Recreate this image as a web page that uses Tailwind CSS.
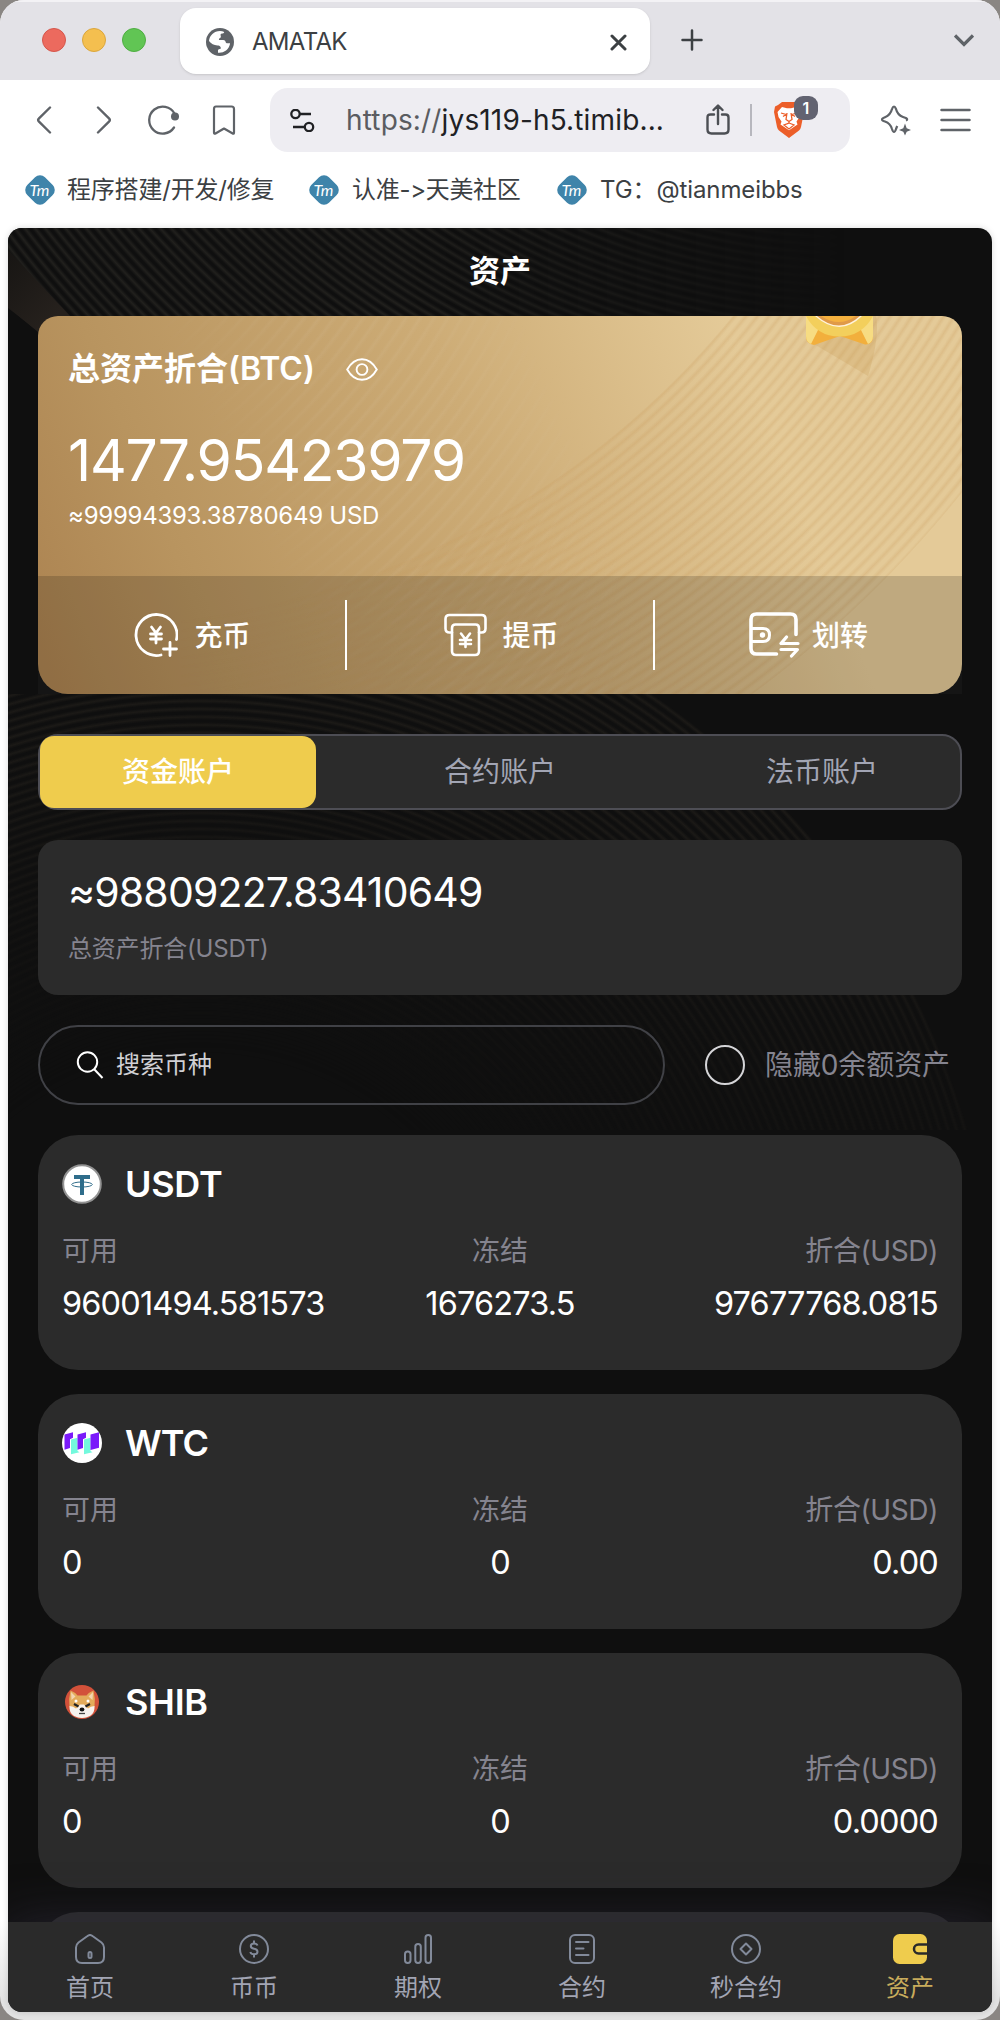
<!DOCTYPE html>
<html lang="zh-CN">
  <head>
    <meta charset="UTF-8" />
    <title>AMATAK</title>
    <script src="https://cdn.jsdelivr.net/npm/@tailwindcss/browser@4"></script>
  </head>
  <body class="bg-[#8a8683] font-['Inter','Noto_Sans_CJK_SC',sans-serif] [font-feature-settings:'calt'_0]">
    <div class="w-[1000px] h-[2020px] rounded-[24px] overflow-hidden flex flex-col bg-linear-to-b from-white from-95% to-[#e2e2e2] to-99%">
      <!-- Tab strip -->
      <div class="h-20 shrink-0 bg-[#e3e2e7] border-t-2 border-[#f3f2f5] flex items-center pl-[42px] pr-[26px] pb-[2px]">
        <div class="flex gap-4">
          <span class="size-6 rounded-full bg-[#ec6a5e] border border-[#d5564b]"></span>
          <span class="size-6 rounded-full bg-[#f4bf4f] border border-[#dba63c]"></span>
          <span class="size-6 rounded-full bg-[#61c554] border border-[#4fae42]"></span>
        </div>
        <div class="ml-[34px] mt-[2px] w-[470px] h-[66px] rounded-[16px] bg-white shadow-sm flex items-center pt-[2px] pl-[26px] pr-[23px]">
          <svg class="size-7" viewBox="0 0 28 28">
            <circle cx="14" cy="14" r="14" fill="#5f6368" />
            <path d="M14 3c1.500 0 3 .3 4.200.9-.2 1-1.200 1.600-2.200 1.700-1.200.1-1.800 1-1.300 2.200.4 1 .1 2-.9 2.400-1 .4-1 1.100-.7 1.900h4.200c1.300 0 2 .7 2.300 1.800.2.900.9 1.300 1.900 1.300h2.600A11 11 0 0 1 12 24.800v-2c0-1 .6-1.500 1.600-1.700 1.100-.2 1.500-1.200.9-2.200-.7-1.100-1.700-1.500-3-1.500C8 17.400 5 15.500 3 13 3.500 7.500 8 3 14 3z" fill="#fff" />
            <path d="M17 6.500c2-.2 3.500-.8 4.500-1.500l3.500 6.500c-1.500 1.500-4 2-5.500.8-1-.8-2.500-.6-2.500-2.300z" fill="#5f6368" />
          </svg>
          <span class="ml-[18px] text-[24px] text-[#3c4043] tracking-[-0.7px]">AMATAK</span>
          <svg class="ml-auto size-[17px]" viewBox="0 0 17 17" stroke="#3c4043" stroke-width="3" stroke-linecap="round"><path d="M2 2l13 13M15 2L2 15" /></svg>
        </div>
        <svg class="ml-[31px] size-[22px]" viewBox="0 0 22 22" stroke="#3c4043" stroke-width="2.500" stroke-linecap="round"><path d="M11 1.500v19M1.500 11h19" /></svg>
        <svg class="ml-auto w-5 h-[13px]" viewBox="0 0 20 13" fill="none" stroke="#5f6368" stroke-width="3.300"><path d="M1 1.500l9 9 9-9" /></svg>
      </div>

      <!-- Address bar -->
      <div class="h-20 shrink-0 flex items-center pl-[36px] pr-[29px] text-[#5f6368]">
        <svg class="w-4 h-7" viewBox="0 0 16 28" fill="none" stroke="currentColor" stroke-width="2.400" stroke-linecap="round" stroke-linejoin="round"><path d="M14 1.500L3 12.300q-1.700 1.700 0 3.400L14 26.500" /></svg>
        <svg class="ml-[44px] w-4 h-7" viewBox="0 0 16 28" fill="none" stroke="currentColor" stroke-width="2.400" stroke-linecap="round" stroke-linejoin="round"><path d="M2 1.500l11 10.800q1.700 1.700 0 3.400L2 26.500" /></svg>
        <svg class="ml-[36px] w-8 h-[30px]" viewBox="0 0 32 30" fill="none" stroke="currentColor" stroke-width="2.300" stroke-linecap="round"><path d="M26 22.500A13.500 13.500 0 1 1 26.500 8.500" /><circle cx="27" cy="11.500" r="4" fill="currentColor" stroke="none" /></svg>
        <svg class="ml-[32px] w-[24px] h-[31px]" viewBox="0 0 24 31" fill="none" stroke="currentColor" stroke-width="2.200" stroke-linejoin="round"><path d="M4 1.500h15.500q2.500 0 2.500 2.500v23.500q0 2-1.700.8L12 23.500l-8.500 5q-1.500.8-1.500-1V4q0-2.500 2-2.500z" /></svg>
        <div class="ml-[34px] w-[580px] h-16 rounded-[18px] bg-[#eeedf2] flex items-center pl-[20px]">
          <svg class="w-[25px] h-[23px]" viewBox="0 0 25 23" fill="none" stroke="#202124" stroke-width="2.300"><circle cx="5.500" cy="5" r="4.200" /><path d="M9.700 5H21M3 18h11.500" /><circle cx="19" cy="18" r="4.200" /></svg>
          <span class="ml-[31px] w-[330px] text-[28px] text-[#202124] whitespace-nowrap tracking-[0.15px]"><span class="text-[#5a5c61]">https://</span>jys119-h5.timib...</span>
          <svg class="ml-[30px] -mt-[2px] w-6 h-[31px]" viewBox="0 0 24 31" fill="none" stroke="#4c4f54" stroke-width="2.400" stroke-linecap="round" stroke-linejoin="round"><path d="M8 10.500H4.500q-3 0-3 3v12q0 4 4 4h13q4 0 4-4v-12q0-3-3-3H16M12 20V2M7.500 6L12 1.500 16.500 6" /></svg>
          <span class="ml-[20px] w-[2px] h-8 bg-[#b7b7be]"></span>
          <div class="relative ml-[22px]">
            <svg class="w-[30px] h-9" viewBox="0 0 30 36">
              <path d="M8 0h14l3.500 3.500L29 4.500 30 10l-3 15q-.5 2-2 3.500L15 36 5 28.500Q3.500 27 3 25L0 10l1-5.500 3-1.500z" fill="#ec5e29" />
              <path d="M8 5l5 1.300h4L22 5l4.500 5-1 5-3 4.500 1 3L15 28.300l-8.500-5.800 1-3-3-4.500-1-5z" fill="#fff" />
              <path d="M7 11l5 1.500-3 2M23 11l-5 1.500 3 2M13 11l-1 6.500 3 2 3-2L17 11M15 19v2l-5 2 5 4 5-4-5-2" fill="none" stroke="#ec5e29" stroke-width="1.300" />
            </svg>
            <span class="absolute left-[20px] -top-[6px] size-6 rounded-[9px] bg-[#626371] text-white text-[16px] font-semibold leading-6 text-center">1</span>
          </div>
        </div>
        <svg class="ml-[30px] w-[31px] h-[31px]" viewBox="0 0 31 31" fill="none" stroke="currentColor" stroke-width="2.200" stroke-linejoin="round">
          <path d="M12 4q2-5 4 0 1.500 6 7 8l3.500 1.300q1.500 1.200-.5 2.200M12 4q-1.500 6-7 8.200Q-1 14.500 5 16.500q5.500 2 7 7.500 2 6 4 0l1.200-3" />
          <path d="M25 18.500l1.700 4.800 4.300 1.700-4.300 1.700L25 30.500l-1.700-3.800L19 25l4.300-1.700z" fill="currentColor" stroke="none" />
        </svg>
        <svg class="ml-auto w-[31px] h-6" viewBox="0 0 31 24" stroke="currentColor" stroke-width="2.500" stroke-linecap="round"><path d="M1.500 2h28M1.500 12h28M1.500 22h28" /></svg>
      </div>

      <!-- Bookmarks -->
      <div class="h-[68px] shrink-0 flex items-center pl-[25px] pb-[8px] text-[24px] text-[#3c4043] whitespace-nowrap">
        <svg class="size-[30px]" viewBox="0 0 30 30"><rect x="2.500" y="2.500" width="25" height="25" rx="7" transform="rotate(45 15 15)" fill="#3f84aa" /><text x="14.500" y="21" text-anchor="middle" font-family="Lato" font-style="italic" font-size="16" fill="#fff">Tm</text></svg>
        <span class="ml-[12px] w-[207px] tracking-[-0.2px]">程序搭建/开发/修复</span>
        <svg class="ml-[35px] size-[30px]" viewBox="0 0 30 30"><rect x="2.500" y="2.500" width="25" height="25" rx="7" transform="rotate(45 15 15)" fill="#3f84aa" /><text x="14.500" y="21" text-anchor="middle" font-family="Lato" font-style="italic" font-size="16" fill="#fff">Tm</text></svg>
        <span class="ml-[13px] w-[170px] tracking-[-0.3px]">认准-&gt;天美社区</span>
        <svg class="ml-[35px] size-[30px]" viewBox="0 0 30 30"><rect x="2.500" y="2.500" width="25" height="25" rx="7" transform="rotate(45 15 15)" fill="#3f84aa" /><text x="14.500" y="21" text-anchor="middle" font-family="Lato" font-style="italic" font-size="16" fill="#fff">Tm</text></svg>
        <span class="ml-[13px] tracking-[-0.1px]">TG：@tianmeibbs</span>
      </div>

      <!-- Page -->
      <div class="relative mx-2 mb-2 h-[1784px] rounded-[14px] overflow-hidden bg-[#0f0f0f] shadow-[0_0_6px_rgba(0,0,0,0.15)] flex flex-col">
        <div class="absolute inset-x-0 top-0 h-[120px] bg-[repeating-radial-gradient(circle_at_842px_-628px,#0f0f0f_0px,#0f0f0f_2px,#21201d_5px,#0f0f0f_8px)] mask-r-from-40% mask-r-to-85%"></div>
        <svg class="absolute left-0 top-0 w-[100px] h-[120px]" viewBox="0 0 100 120">
          <defs>
            <linearGradient id="band" x1="0" y1="0" x2="1" y2="1"><stop offset="0" stop-color="#171513" /><stop offset=".6" stop-color="#26211d" /></linearGradient>
          </defs>
          <path d="M0 22L62 88 90 120 40 112 0 80z" fill="url(#band)" /><path d="M0 80l40 32v8H0z" fill="#0f0f0f" />
        </svg>
        <div class="absolute left-0 top-[466px] w-full h-[436px] bg-[repeating-radial-gradient(circle_at_192px_660px,transparent_0px,transparent_2px,#1c1a17_5px,transparent_8px)] mask-[radial-gradient(circle_at_192px_660px,transparent_300px,black_650px,black_800px,transparent_801px),linear-gradient(to_bottom,black_30%,rgba(0,0,0,0.4)_100%)] mask-intersect"></div>

        <div class="relative h-[1694px] overflow-hidden px-[30px]">
          <h1 class="h-[88px] flex items-center justify-center pb-[2px] text-[31px] font-semibold text-white">资产</h1>

          <!-- Total assets -->
          <section class="relative h-[378px] rounded-t-[20px] bg-[#151515] text-white overflow-hidden">
            <div class="absolute inset-0 rounded-b-[30px] bg-[linear-gradient(68deg,#ab8250_0%,#b8945f_18%,#cdac76_50%,#e4ca98_78%,#e4ca98_100%)]"></div>
            <div class="absolute inset-0 rounded-b-[30px] bg-[repeating-radial-gradient(circle_at_-200px_-350px,transparent_0px,transparent_5px,rgba(255,255,255,0.05)_8px,transparent_12px)] mask-[linear-gradient(65deg,transparent_25%,black_40%,black_50%,transparent_62%)]"></div>
            <div class="absolute inset-0 rounded-b-[30px] bg-[repeating-radial-gradient(circle_at_42px_-531px,transparent_0px,transparent_3px,rgba(200,152,88,0.24)_6px,transparent_9px)] mask-[radial-gradient(circle_at_42px_-531px,transparent_841px,black_842px,black_1130px,transparent_1131px),linear-gradient(to_right,transparent_15%,black_65%)] mask-intersect"></div>
            <svg class="absolute left-[768px] top-0 w-[74px] h-[64px]" viewBox="0 0 74 64">
              <path d="M8 28L62 60Q74 20 70 0H40z" fill="#c99a55" opacity=".25" />
              <path d="M0 0h67v20q0 9-8 8.500L34 20 8 29Q0 28 0 20z" fill="#f2af3c" />
              <path d="M0 0h12v14L5 28Q0 26 0 20zM67 0H55v14l7 14q5-2 5-8z" fill="#f7dc82" />
              <path d="M0 0Q11 20.500 33.500 20.500T67 0z" fill="#f3cf5c" />
              <path d="M9 0q25 22 47 0z" fill="#fff3dc" />
              <path d="M11 0q22 19 43 0z" fill="#e09a48" />
              <path d="M15 0q18 12 35 0z" fill="#f5b13f" />
            </svg>
            <div class="relative h-[260px] px-[30px] pt-[28px] whitespace-nowrap">
              <div class="h-[50px] flex items-center">
                <span class="w-[278px] text-[32px] font-semibold tracking-[0px]">总资产折合(BTC)</span>
                <svg class="w-[32px] h-[23px]" viewBox="0 0 32 23" fill="none" stroke="#fff" stroke-width="1.900"><path d="M1.200 11.500Q7 1.200 16 1.200t14.800 10.300Q25 21.800 16 21.800T1.200 11.500z" /><circle cx="16" cy="11.500" r="5.400" /></svg>
              </div>
              <div class="mt-[31px] h-[72px] leading-[72px] text-[57px] tracking-[-1.200px]">1477.95423979</div>
              <div class="h-[38px] leading-[38px] text-[24px] tracking-[-0.250px]">≈99994393.38780649 USD</div>
            </div>
            <div class="relative h-[118px] rounded-b-[30px] bg-black/16 flex items-center text-[28px] font-medium">
              <div class="w-[309px] h-[70px] border-r-2 border-white flex items-center justify-center gap-4 pl-[2px]">
                <svg class="size-[44px]" viewBox="0 0 44 44" fill="none" stroke="#fff" stroke-width="2.800" stroke-linecap="round"><path d="M42.500 26.500A20.500 20.500 0 1 0 27 42" /><path d="M17.500 14l4.500 6 4.500-6M22 20v10M16.500 21h11M16.500 26h11M36 29.500v13M29.500 36h13" /></svg>
                <span class="pt-[2px]">充币</span>
              </div>
              <div class="w-[308px] h-[70px] border-r-2 border-white flex items-center justify-center gap-[15px] pl-[3px]">
                <svg class="w-[43px] h-[44px]" viewBox="0 0 43 44" fill="none" stroke="#fff" stroke-width="2.600" stroke-linecap="round" stroke-linejoin="round"><path d="M8 19.500H5.500q-4 0-4-4V6q0-4 4-4h32q4 0 4 4v9.500q0 4-4 4H35" /><path d="M11.500 11.500h20q3.500 0 3.500 3.500v23q0 4-4 4H12q-4 0-4-4V15q0-3.500 3.500-3.500zM17 20.500l4.500 6 4.500-6M21.500 26.500v7.500M16 27h11M16 31h11" /></svg>
                <span class="pt-[2px]">提币</span>
              </div>
              <div class="w-[307px] flex items-center justify-center gap-3">
                <svg class="w-[51px] h-[46px]" viewBox="0 0 51 46" fill="none" stroke="#fff" stroke-width="3.600" stroke-linecap="round" stroke-linejoin="round"><path d="M27.500 42H7.500q-5.500 0-5.500-5.500v-29Q2 2 7.500 2h34q5.500 0 5.500 5.500v15" /><path d="M3 16.500h11q6.500 0 6.500 6.500t-6.500 6.500H3" stroke-width="3" /><circle cx="13.500" cy="23" r="2.700" fill="#fff" stroke="none" /><path d="M37.500 25L32 31.500h17M32 37.500h16.500L42.500 44" stroke-width="3.200" /></svg>
                <span class="pt-[2px]">划转</span>
              </div>
            </div>
          </section>

          <!-- Account tabs -->
          <div class="mt-10 h-[76px] rounded-[20px] border-2 border-[#4d4d54] bg-[#2b2b2b] flex text-[28px] text-[#a2a5b4] text-center leading-[73px]">
            <div class="w-[276px] h-[72px] rounded-[14px] bg-[#efcc4d] text-white font-medium">资金账户</div>
            <div class="w-[368px]">合约账户</div>
            <div class="w-[276px]">法币账户</div>
          </div>

          <section class="mt-[30px] h-[155px] rounded-[20px] bg-[#2b2b2b] px-[30px] pt-[24px] whitespace-nowrap">
            <div class="h-[56px] leading-[56px] text-[41px] text-white tracking-[-0.850px]">≈98809227.83410649</div>
            <div class="h-[58px] leading-[58px] text-[24px] text-[#85848f] tracking-[-0.200px]">总资产折合(USDT)</div>
          </section>

          <!-- Search -->
          <div class="mt-[30px] h-20 flex items-center">
            <div class="w-[627px] h-20 rounded-full border-2 border-[#404146] flex items-center pl-[36px]">
              <svg class="size-[28px]" viewBox="0 0 28 28" fill="none" stroke="#fff" stroke-width="2"><circle cx="11.500" cy="11" r="9.700" /><path d="M18 18l8.500 9" /></svg>
              <span class="ml-[12px] text-[24px] text-[#d0d0d4]">搜索币种</span>
            </div>
            <span class="ml-10 size-10 rounded-full border-2 border-[#d5d5d8]"></span>
            <span class="ml-[20px] text-[28px] text-[#85848f] whitespace-nowrap tracking-[-0.1px]">隐藏0余额资产</span>
          </div>

          <!-- Coin list -->
          <div class="mt-[30px] flex flex-col gap-6">
            <div class="h-[235px] rounded-[40px] bg-[#2b2b2b] px-6 pt-[22px]">
              <div class="h-[54px] flex items-center">
                <svg class="size-10" viewBox="0 0 40 40"><circle cx="20" cy="20" r="18.800" fill="#fff" stroke="#929292" stroke-width="2" /><path d="M12 11h16v4h-6v16h-4V15h-6z" fill="#2f6d8b" /><ellipse cx="20" cy="20.500" rx="10.300" ry="2.500" fill="none" stroke="#2f6d8b" stroke-width="1" /></svg>
                <span class="ml-[23px] text-[36px] font-semibold text-white tracking-[-0.300px]">USDT</span>
              </div>
              <div class="grid grid-cols-3 text-[28px] text-[#85848f] leading-[56px] mt-[12px]">
                <span>可用</span><span class="text-center">冻结</span><span class="text-right tracking-[-0.4px]">折合(USD)</span>
              </div>
              <div class="grid grid-cols-3 text-[32.5px] text-white leading-[50px] tracking-[-0.850px]">
                <span>96001494.581573</span><span class="text-center">1676273.5</span><span class="text-right">97677768.0815</span>
              </div>
            </div>

            <div class="h-[235px] rounded-[40px] bg-[#2b2b2b] px-6 pt-[22px]">
              <div class="h-[54px] flex items-center">
                <svg class="size-10" viewBox="0 0 40 40"><circle cx="20" cy="20" r="20" fill="#fff" /><path d="M9 16.500l6.500-1.800V28l2 1.200-8.500 2zM22 16.500l6.500-1.800V28l2 1.200-8.500 2z" fill="#73f9dd" /><path d="M2.500 11.500L11 9.200v5.500l-3 1.500V25l-5.500 1.700zM15.500 11.500L24 9.200v5.500l-3 1.500V25l-5.500 1.700zM28.500 11.500L37 9.200v15.500l-8.500 2.300z" fill="#7a19fa" /></svg>
                <span class="ml-[23px] text-[36px] font-semibold text-white tracking-[-0.900px]">WTC</span>
              </div>
              <div class="grid grid-cols-3 text-[28px] text-[#85848f] leading-[56px] mt-[12px]">
                <span>可用</span><span class="text-center">冻结</span><span class="text-right tracking-[-0.4px]">折合(USD)</span>
              </div>
              <div class="grid grid-cols-3 text-[32.5px] text-white leading-[50px] tracking-[-0.850px]">
                <span>0</span><span class="text-center">0</span><span class="text-right">0.00</span>
              </div>
            </div>

            <div class="h-[235px] rounded-[40px] bg-[#2b2b2b] px-6 pt-[22px]">
              <div class="h-[54px] flex items-center">
                <svg class="size-10" viewBox="0 0 40 40">
                  <circle cx="20" cy="20" r="17" fill="#d2513a" />
                  <path d="M8.500 8.500q4 1.500 7 5h9q3-3.500 7-5 2 8 1 16Q31 34 20 36 9 34 7.500 24.500q-1-8 1-16z" fill="#e3ab5b" />
                  <path d="M9 10l4.500 4.500L9.500 18zM31 10l-4.500 4.500 4 3.500z" fill="#f3d5b0" />
                  <path d="M7.500 24q4 0 6.500 2.500 2-1 4-4h4q2 3 4 4 2.500-2.500 6.500-2.500.5 7-4.500 10-8 4-16 0-5-3-4.500-10z" fill="#f7f2ee" />
                  <path d="M12 22l4.500 2.500M28 22l-4.500 2.500" stroke="#222" stroke-width="2.200" />
                  <circle cx="14" cy="19" r="1.500" fill="#fff" /><circle cx="26" cy="19" r="1.500" fill="#fff" />
                  <ellipse cx="20" cy="27.500" rx="2.400" ry="1.900" fill="#111" /><path d="M17 31.500h6" stroke="#444" stroke-width="1.300" />
                </svg>
                <span class="ml-[23px] text-[36px] font-semibold text-white tracking-[-0.300px]">SHIB</span>
              </div>
              <div class="grid grid-cols-3 text-[28px] text-[#85848f] leading-[56px] mt-[12px]">
                <span>可用</span><span class="text-center">冻结</span><span class="text-right tracking-[-0.4px]">折合(USD)</span>
              </div>
              <div class="grid grid-cols-3 text-[32.5px] text-white leading-[50px] tracking-[-0.850px]">
                <span>0</span><span class="text-center">0</span><span class="text-right">0.0000</span>
              </div>
            </div>

            <div class="h-[235px] rounded-[40px] bg-[#2b2b2b]"></div>
          </div>
        </div>

        <!-- Bottom navigation -->
        <nav class="relative h-[90px] bg-[#2a2a2a] shadow-[0_0_50px_rgba(45,43,58,0.7)] grid grid-cols-6 text-[24px] text-[#a2a5b4] leading-[36px] text-center">
          <div class="pt-3">
            <svg class="mx-auto size-[30px]" viewBox="0 0 30 30" fill="none" stroke="#828a9a" stroke-width="2" stroke-linejoin="round"><path d="M12.500 2q2.500-2 5 0l9 6.500q2.500 2 2.500 5V23q0 6-6 6H7q-6 0-6-6v-9.500q0-3 2.500-5z" /><rect x="13.500" y="18" width="3" height="6" rx="1.500" /></svg>
            <div class="mt-[6px]">首页</div>
          </div>
          <div class="pt-3">
            <svg class="mx-auto size-[30px]" viewBox="0 0 30 30" fill="none" stroke="#828a9a" stroke-width="2"><circle cx="15" cy="15" r="14" /><path d="M18.500 11.500q-.8-2-3.500-2-3.200 0-3.200 2.600 0 2.200 3.200 2.700 3.500.5 3.500 2.900 0 2.500-3.500 2.500-3 0-3.700-2.200M15 6.500v3M15 20.200v3.300" /></svg>
            <div class="mt-[6px]">币币</div>
          </div>
          <div class="pt-3">
            <svg class="mx-auto size-[30px]" viewBox="0 0 30 30" fill="none" stroke="#828a9a" stroke-width="2"><rect x="2" y="17.500" width="5.500" height="11.500" rx="2.700" /><rect x="12.300" y="10" width="5.500" height="19" rx="2.700" /><rect x="22.500" y="1" width="5.500" height="28" rx="2.700" /></svg>
            <div class="mt-[6px]">期权</div>
          </div>
          <div class="pt-3">
            <svg class="mx-auto size-[30px]" viewBox="0 0 30 30" fill="none" stroke="#828a9a" stroke-width="2" stroke-linecap="round"><rect x="3" y="1" width="24" height="28" rx="5" /><path d="M9 8h12.500M9 14.500h7.500M9 21h12.500" /></svg>
            <div class="mt-[6px]">合约</div>
          </div>
          <div class="pt-3">
            <svg class="mx-auto size-[30px]" viewBox="0 0 30 30" fill="none" stroke="#828a9a" stroke-width="2" stroke-linejoin="round"><circle cx="15" cy="15" r="14" /><path d="M15 9.500l5.500 5.500-5.500 5.500L9.500 15z" /></svg>
            <div class="mt-[6px]">秒合约</div>
          </div>
          <div class="pt-3 text-[#c8ac5c]">
            <svg class="mx-auto w-[34px] h-[30px]" viewBox="0 0 34 30"><rect width="34" height="30" rx="6.500" fill="#efcc4d" /><path d="M35 10.500h-9.500a4.500 4.500 0 0 0 0 9H35" fill="none" stroke="#2a2a2a" stroke-width="2.500" /></svg>
            <div class="mt-[6px]">资产</div>
          </div>
        </nav>
      </div>
    </div>
  </body>
</html>
